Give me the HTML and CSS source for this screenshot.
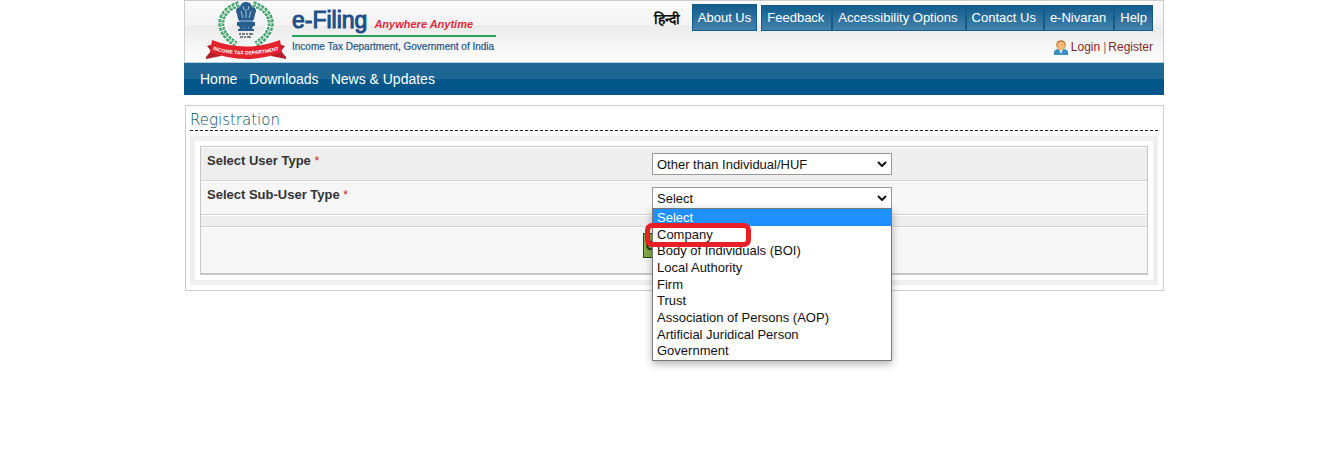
FILE: index.html
```html
<!DOCTYPE html>
<html lang="en">
<head>
<meta charset="utf-8">
<title>e-Filing - Registration</title>
<link rel="stylesheet" href="styles.css">
</head>
<body>
<div class="page">
  <header class="header">
    <div class="brand">
      <svg class="emblem" viewBox="0 0 82 58" role="img" aria-label="Income Tax Department emblem">
        <g fill="none">
          <path d="M33 3C14 10 12 31 31 43M49 3c19 7 21 28 2 40" stroke="#fff" stroke-width="8"/>
          <path d="M34 3C12 10 10 31 31 43M48 3c22 7 24 28 3 40" stroke="#3fa06b" stroke-width="6" stroke-dasharray="3 1"/>
          <path d="M34 3C12 10 10 31 31 43M48 3c22 7 24 28 3 40" stroke="#b9dcc6" stroke-width="2" stroke-dasharray="2 2"/>
        </g>
        <g fill="#285d8f">
          <path d="M35 6q1-5 6-5t6 5l3 1q2 3 0 6l-1 5-2 3H35l-2-3-1-5q-2-3 0-6z"/>
          <path d="M32 21h18v4H32zM34 25h14l-1 3H35z"/>
          <path d="M33 28h16v2H33z"/>
        </g>
        <path d="M38 5l1 4M44 5l-1 4M36 10l2 7M46 10l-2 7M41 8v9M35 20h12M38 27h1M43 27h1" stroke="#a8c1d6" stroke-width="1" fill="none"/>
        <path d="M34 33h2m1 0h3m1 0h2m1 0h4M35 36h3m1 0h2m1 0h4" stroke="#4b5560" stroke-width="1.6"/>
        <path d="M1 56l5-6-4-5 10-3 4 13-15 3zM81 56l-5-6 4-5-10-3-4 13 15 3z" fill="#b51f2b"/>
        <path d="M7 39q34 13 68 0l2 12q-36 14-72 0z" fill="#e4222c"/>
        <path id="arc" d="M5 48q36 11 72 0" fill="none"/>
        <text class="ribbon-text"><textPath href="#arc" startOffset="50%" text-anchor="middle">INCOME TAX DEPARTMENT</textPath></text>
      </svg>
      <div class="brand-text">
        <div class="brand-top"><span class="brand-name">e-Filing</span><span class="brand-slogan">Anywhere Anytime</span></div>
        <div class="brand-dept">Income Tax Department, Government of India</div>
      </div>
    </div>
    <div class="tools">
      <nav class="top-links" aria-label="Site">
        <a class="hindi" href="#" lang="hi">हिन्दी</a>
        <a class="tab tab-about" href="#">About Us</a>
        <span class="tab-group"><a class="tab" href="#">Feedback</a><a class="tab" href="#">Accessibility Options</a><a class="tab" href="#">Contact Us</a><a class="tab" href="#">e-Nivaran</a><a class="tab" href="#">Help</a></span>
      </nav>
      <div class="account">
        <svg class="user" viewBox="0 0 14 15" aria-hidden="true">
          <path d="M0 15v-3q0-2 4-3h6q4 1 4 3v3z" fill="#3c8fc5"/>
          <path d="M5 9l2 5 2-5z" fill="#e9f3fa"/>
          <circle cx="7" cy="5" r="4.8" fill="#bd7b35"/>
          <ellipse cx="7" cy="6" rx="3.8" ry="4.2" fill="#f3b875"/>
        </svg>
        <a href="#">Login</a><span class="sep">|</span><a href="#">Register</a>
      </div>
    </div>
  </header>
  <nav class="main-nav" aria-label="Main">
    <a href="#">Home</a><a href="#">Downloads</a><a href="#">News &amp; Updates</a>
  </nav>
  <main class="panel">
    <h1 class="title">Registration</h1>
    <form class="frame">
      <div class="grid">
        <div class="row shade">
          <label for="user-type">Select User Type <span class="req">*</span></label>
          <div class="field"><select id="user-type" class="select"><option>Other than Individual/HUF</option></select></div>
        </div>
        <div class="row">
          <label for="sub-type">Select Sub-User Type <span class="req">*</span></label>
          <div class="field">
            <select id="sub-type" class="select"><option>Select</option></select>
            <ul class="menu" role="listbox" aria-label="Select Sub-User Type">
              <li role="option" aria-selected="true" class="active">Select</li>
              <li role="option">Company</li>
              <li role="option">Body of Individuals (BOI)</li>
              <li role="option">Local Authority</li>
              <li role="option">Firm</li>
              <li role="option">Trust</li>
              <li role="option">Association of Persons (AOP)</li>
              <li role="option">Artificial Juridical Person</li>
              <li role="option">Government</li>
            </ul>
            <span class="mark"></span>
          </div>
        </div>
        <div class="spacer shade"></div>
        <div class="actions"><button class="go" type="button">Continue</button></div>
      </div>
    </form>
  </main>
</div>
</body>
</html>
```
FILE: styles.css
```css
* { box-sizing: border-box; }
body {
  min-height: 100vh;
  margin: 0;
  padding-left: 5px;
  background: #fff;
  color: #333;
  font-family: "Liberation Sans", Arial, sans-serif;
  font-size: 13px;
}
a { color: inherit; text-decoration: none; }
.page { max-width: 980px; margin: 0 auto; }

.header {
  display: flex;
  justify-content: space-between;
  height: 63px;
  padding: 0 10px 0 20px;
  border: 1px solid #ccc;
  border-bottom-color: #b5d3e2;
  background: linear-gradient(#fbfbfb 0, #f3f3f3 24px, #ebebeb 25px, #fdfdfd 100%);
}
.brand { display: flex; gap: 5px; }
.emblem { width: 82px; height: 58px; }
.ribbon-text { font: bold 5px "Liberation Sans", Arial, sans-serif; fill: #fff; }
.brand-text { padding-top: 6px; }
.brand-top {
  display: flex;
  align-items: baseline;
  gap: 7px;
  height: 30px;
  border-bottom: 2px solid #27a05a;
}
.brand-name { color: #1d4f88; font-size: 23px; line-height: 27px; -webkit-text-stroke: 1px #1d4f88; }
.brand-slogan { color: #df2a3c; font: italic bold 11px "Liberation Sans", sans-serif; }
.brand-dept { padding-right: 2px; color: #1f5684; font: 10px/19px "Liberation Sans", sans-serif; -webkit-text-stroke: 1px #1f5684; -webkit-text-stroke-width: thin; }

.tools { display: flex; flex-direction: column; align-items: flex-end; gap: 9px; padding-top: 3px; }
.top-links { display: flex; align-items: flex-end; font-size: 13px; }
.hindi { margin-right: 12px; color: #111; font-size: 14px; line-height: 24px; font-weight: bold; }
.tab {
  padding: 0 5px;
  border: 1px solid #125c8c;
  background: linear-gradient(#125c8c, #4583ab);
  color: #fff;
  line-height: 24px;
}
.tab-about { margin-right: 4px; line-height: 25px; }
.tab-group { display: flex; }
.tab-group .tab { padding: 0 7px 0 5px; }
.tab-group .tab:last-child { padding-right: 5px; }
.account { display: flex; align-items: center; color: #832a1d; font-size: 12px; line-height: 15px; }
.user { width: 14px; height: 15px; margin-right: 3px; }
.sep { margin: 0 2px 0 3px; color: #777; }

.main-nav {
  display: flex;
  gap: 12px;
  padding: 0 16px;
  background: linear-gradient(#1e6795 50%, #02568a 50%);
  color: #fff;
  font-size: 14px;
  line-height: 32px;
}

.panel { margin: 10px 0 0 1px; padding: 4px 5px 5px 4px; border: 1px solid #ccc; }
.title {
  margin: 0 0 5px;
  border-bottom: 1px dashed #222;
  color: #004a68;
  font: 200 15px/20px "DejaVu Sans", sans-serif;
}
.frame { padding: 5px; border: 5px solid #efefef; }
.grid { border: 1px solid #c6c6c6; border-bottom-width: 2px; background: #f6f6f6; }
.row {
  display: grid;
  grid-template-columns: 451fr 495fr;
  height: 34px;
  border-top: 1px solid #fff;
  border-bottom: 1px solid #d2d2d2;
}
.row label { padding: 5px 6px; font-weight: bold; line-height: 16px; }
.shade { background: #eee; }
.req { color: #c22; font-weight: normal; font-size: 12px; }
.field { position: relative; padding-top: 5px; }
.select {
  appearance: none;
  display: block;
  width: 240px;
  height: 22px;
  margin: 0;
  padding: 0 4px;
  border: 1px solid #999;
  border-radius: 0;
  background: #fff url("data:image/svg+xml,%3Csvg xmlns='http://www.w3.org/2000/svg' width='10' height='6'%3E%3Cpath d='M1 1l4 4 4-4' fill='none' stroke='%23111' stroke-width='2'/%3E%3C/svg%3E") no-repeat right 4px center;
  color: #111;
  font: 13px "Liberation Sans", Arial, sans-serif;
}
.menu {
  position: absolute;
  z-index: 1;
  top: 26px;
  left: 0;
  width: 240px;
  margin: 0;
  padding: 0 0 1px;
  border: 1px solid #777;
  background: #fff;
  box-shadow: 0 3px 8px rgba(0, 0, 0, .3);
  color: #111;
  list-style: none;
}
.menu li { padding: 0 4px; line-height: 17px; }
.menu li:nth-child(3n) { line-height: 16px; }
.menu .active { background: #1e90ff; color: #fff; }
.mark {
  position: absolute;
  z-index: 2;
  top: 41px;
  left: -7px;
  width: 106px;
  height: 24px;
  border: 5px solid #e71f26;
  border-radius: 7px;
}
.spacer { height: 12px; border-top: 1px solid #fff; border-bottom: 1px solid #d2d2d2; }
.actions { display: flex; justify-content: center; height: 46px; padding-top: 5px; border-top: 1px solid #fff; }
.go {
  width: 62px;
  height: 25px;
  padding: 0;
  border: 1px solid #34491f;
  background: #80ab42;
  color: #1d2b0d;
  font: bold 13px "Liberation Sans", Arial, sans-serif;
}
```
